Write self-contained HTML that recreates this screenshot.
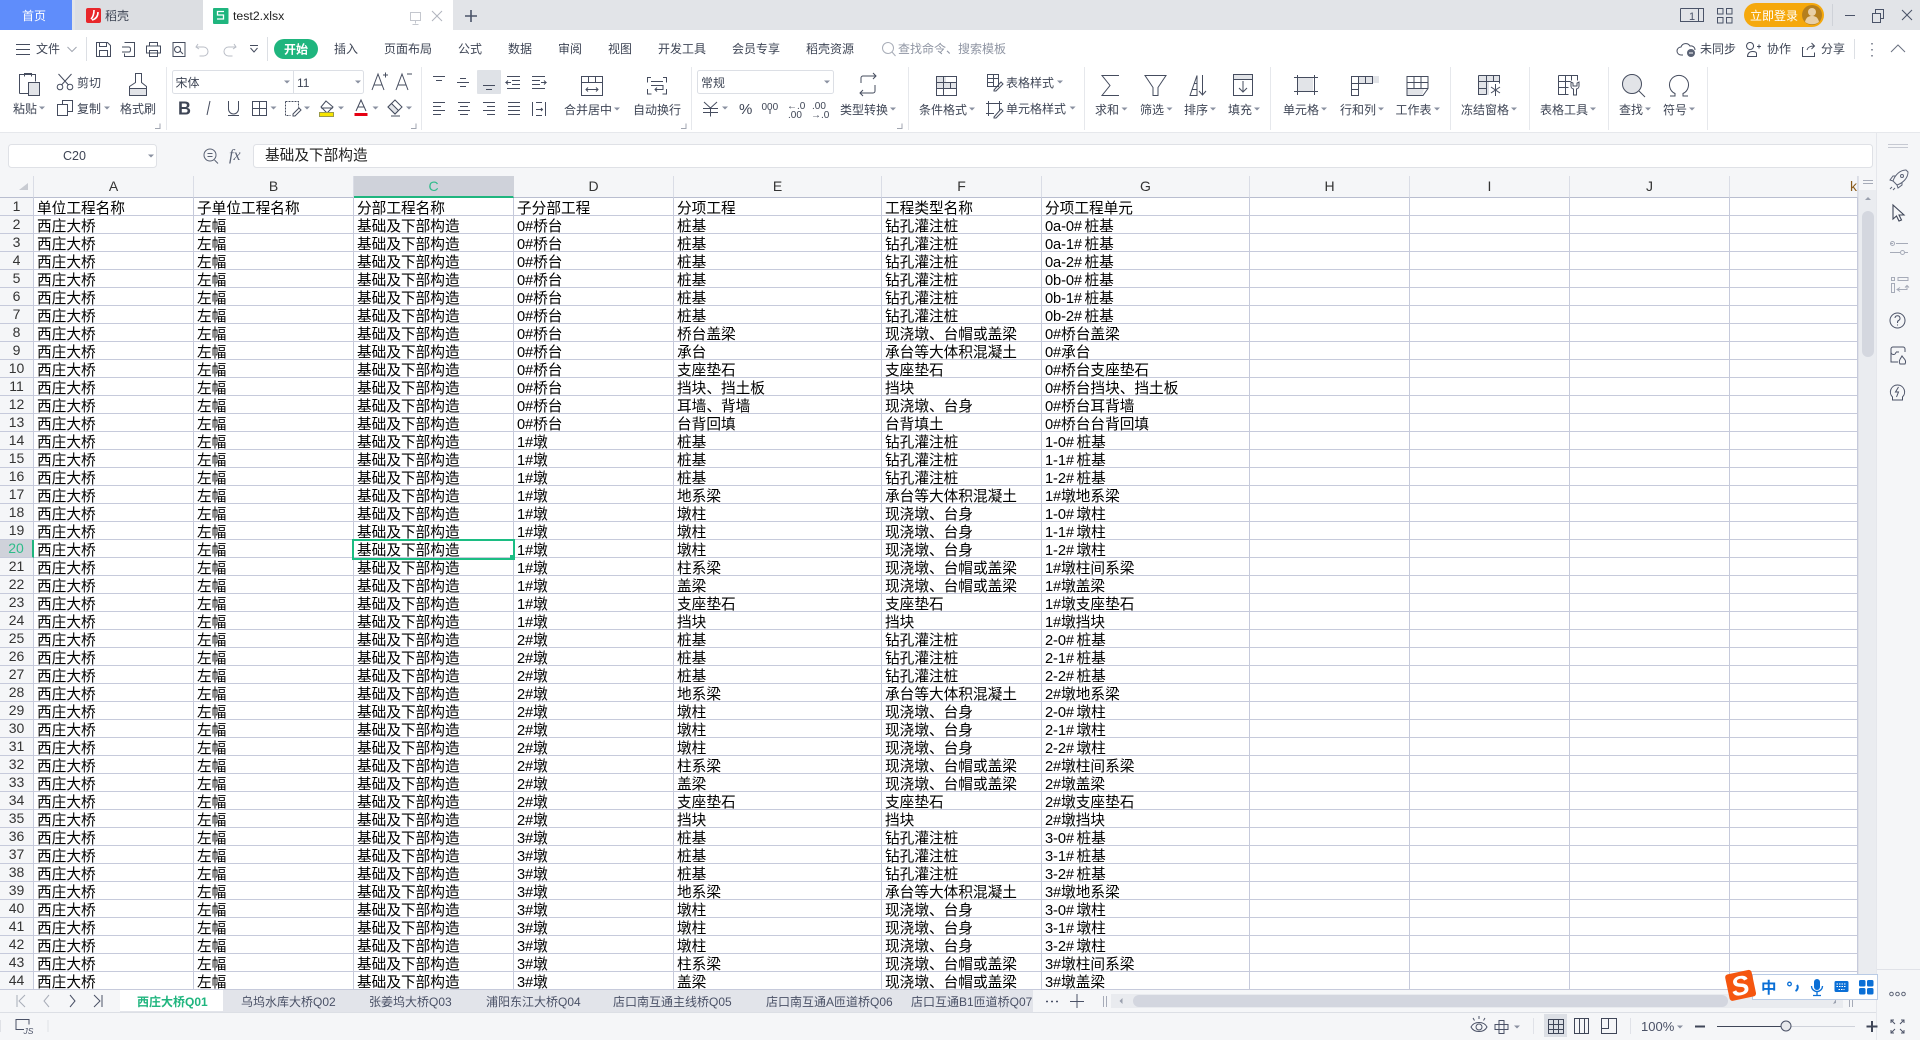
<!DOCTYPE html>
<html lang="zh"><head><meta charset="utf-8"><title>test2.xlsx</title>
<style>
html,body{margin:0;padding:0;width:1920px;height:1040px;overflow:hidden;background:#f5f6f8}
#ui{position:absolute;left:0;top:0;width:1920px;height:1040px}
#ui text{font-family:"Liberation Sans","Noto Sans CJK SC",sans-serif;font-size:12px;fill:#3e4555}
.s{fill:none;stroke:#454c5e;stroke-width:1}
.g{fill:#e2e4e8;stroke:#454c5e;stroke-width:1}
.sep{stroke:#e6e8ec;stroke-width:1}
#sh{position:absolute;left:0;top:176px;width:1858px;height:813px;overflow:hidden;background:#fff}
table,thead,tbody{display:block;width:1858px}
table{font-family:"WenQuanYi Zen Hei","Noto Sans CJK SC",sans-serif;font-size:14.67px;color:#000}
tr{display:flex;height:18px}
thead tr{height:22px}
td,th{display:block;flex:none;box-sizing:border-box;width:160px;overflow:hidden;white-space:nowrap;border-right:1px solid #c6cadb;border-bottom:1px solid #c6cadb}
th:first-child{width:34px}
td:nth-child(6),td:nth-child(8),th:nth-child(6),th:nth-child(8){width:208px}
td:nth-child(12),th:nth-child(12){width:128px}
td{height:18px;padding:2px 0 0 3px;line-height:15px}
th{background:#f5f6f8;font:14px/17px "Liberation Sans",sans-serif;color:#333;padding:0;text-align:center;height:18px}
thead th{height:22px;line-height:21px;border-right:1px solid #dadde6;border-bottom:1px solid #b9bed0}
thead th.c{background:#cfd2da;color:#2ebc8a;border-bottom:2px solid #1fb57e;border-right:1px solid #cfd2da}
th.r{background:#cfd2da;color:#2ebc8a;border-right:2px solid #1fb57e}
i{font:normal 14.67px/0 "Liberation Sans",sans-serif;letter-spacing:-.1px}
i.h{padding-right:2.5px}
#sel{position:absolute;left:352px;top:539px;width:159px;height:17px;border:2px solid #1cbd83}
#hd{position:absolute;left:510px;top:555px;width:5px;height:5px;background:#1cbd83}
#vb{position:absolute;left:1858px;top:176px;width:18px;height:837px;background:#eaecf0}
#side{position:absolute;left:1876px;top:132px;width:44px;height:908px;background:#f5f6f8;border-left:1px solid #e5e7ec;box-sizing:border-box}
</style></head><body>
<div id="sh"><table>
<thead><tr><th></th><th>A</th><th>B</th><th class="c">C</th><th>D</th><th>E</th><th>F</th><th>G</th><th>H</th><th>I</th><th>J</th><th style="text-align:right;color:#8a5a1a">k</th></tr></thead>
<tbody>
<tr><th>1<td>单位工程名称<td>子单位工程名称<td>分部工程名称<td>子分部工程<td>分项工程<td>工程类型名称<td>分项工程单元<td><td><td><td></tr>
<tr><th>2<td>西庄大桥<td>左幅<td>基础及下部构造<td><i>0#</i>桥台<td>桩基<td>钻孔灌注桩<td><i class="h">0a-0#</i>桩基<td><td><td><td></tr>
<tr><th>3<td>西庄大桥<td>左幅<td>基础及下部构造<td><i>0#</i>桥台<td>桩基<td>钻孔灌注桩<td><i class="h">0a-1#</i>桩基<td><td><td><td></tr>
<tr><th>4<td>西庄大桥<td>左幅<td>基础及下部构造<td><i>0#</i>桥台<td>桩基<td>钻孔灌注桩<td><i class="h">0a-2#</i>桩基<td><td><td><td></tr>
<tr><th>5<td>西庄大桥<td>左幅<td>基础及下部构造<td><i>0#</i>桥台<td>桩基<td>钻孔灌注桩<td><i class="h">0b-0#</i>桩基<td><td><td><td></tr>
<tr><th>6<td>西庄大桥<td>左幅<td>基础及下部构造<td><i>0#</i>桥台<td>桩基<td>钻孔灌注桩<td><i class="h">0b-1#</i>桩基<td><td><td><td></tr>
<tr><th>7<td>西庄大桥<td>左幅<td>基础及下部构造<td><i>0#</i>桥台<td>桩基<td>钻孔灌注桩<td><i class="h">0b-2#</i>桩基<td><td><td><td></tr>
<tr><th>8<td>西庄大桥<td>左幅<td>基础及下部构造<td><i>0#</i>桥台<td>桥台盖梁<td>现浇墩、台帽或盖梁<td><i>0#</i>桥台盖梁<td><td><td><td></tr>
<tr><th>9<td>西庄大桥<td>左幅<td>基础及下部构造<td><i>0#</i>桥台<td>承台<td>承台等大体积混凝土<td><i>0#</i>承台<td><td><td><td></tr>
<tr><th>10<td>西庄大桥<td>左幅<td>基础及下部构造<td><i>0#</i>桥台<td>支座垫石<td>支座垫石<td><i>0#</i>桥台支座垫石<td><td><td><td></tr>
<tr><th>11<td>西庄大桥<td>左幅<td>基础及下部构造<td><i>0#</i>桥台<td>挡块、挡土板<td>挡块<td><i>0#</i>桥台挡块、挡土板<td><td><td><td></tr>
<tr><th>12<td>西庄大桥<td>左幅<td>基础及下部构造<td><i>0#</i>桥台<td>耳墙、背墙<td>现浇墩、台身<td><i>0#</i>桥台耳背墙<td><td><td><td></tr>
<tr><th>13<td>西庄大桥<td>左幅<td>基础及下部构造<td><i>0#</i>桥台<td>台背回填<td>台背填土<td><i>0#</i>桥台台背回填<td><td><td><td></tr>
<tr><th>14<td>西庄大桥<td>左幅<td>基础及下部构造<td><i>1#</i>墩<td>桩基<td>钻孔灌注桩<td><i class="h">1-0#</i>桩基<td><td><td><td></tr>
<tr><th>15<td>西庄大桥<td>左幅<td>基础及下部构造<td><i>1#</i>墩<td>桩基<td>钻孔灌注桩<td><i class="h">1-1#</i>桩基<td><td><td><td></tr>
<tr><th>16<td>西庄大桥<td>左幅<td>基础及下部构造<td><i>1#</i>墩<td>桩基<td>钻孔灌注桩<td><i class="h">1-2#</i>桩基<td><td><td><td></tr>
<tr><th>17<td>西庄大桥<td>左幅<td>基础及下部构造<td><i>1#</i>墩<td>地系梁<td>承台等大体积混凝土<td><i>1#</i>墩地系梁<td><td><td><td></tr>
<tr><th>18<td>西庄大桥<td>左幅<td>基础及下部构造<td><i>1#</i>墩<td>墩柱<td>现浇墩、台身<td><i class="h">1-0#</i>墩柱<td><td><td><td></tr>
<tr><th>19<td>西庄大桥<td>左幅<td>基础及下部构造<td><i>1#</i>墩<td>墩柱<td>现浇墩、台身<td><i class="h">1-1#</i>墩柱<td><td><td><td></tr>
<tr><th class="r">20<td>西庄大桥<td>左幅<td>基础及下部构造<td><i>1#</i>墩<td>墩柱<td>现浇墩、台身<td><i class="h">1-2#</i>墩柱<td><td><td><td></tr>
<tr><th>21<td>西庄大桥<td>左幅<td>基础及下部构造<td><i>1#</i>墩<td>柱系梁<td>现浇墩、台帽或盖梁<td><i>1#</i>墩柱间系梁<td><td><td><td></tr>
<tr><th>22<td>西庄大桥<td>左幅<td>基础及下部构造<td><i>1#</i>墩<td>盖梁<td>现浇墩、台帽或盖梁<td><i>1#</i>墩盖梁<td><td><td><td></tr>
<tr><th>23<td>西庄大桥<td>左幅<td>基础及下部构造<td><i>1#</i>墩<td>支座垫石<td>支座垫石<td><i>1#</i>墩支座垫石<td><td><td><td></tr>
<tr><th>24<td>西庄大桥<td>左幅<td>基础及下部构造<td><i>1#</i>墩<td>挡块<td>挡块<td><i>1#</i>墩挡块<td><td><td><td></tr>
<tr><th>25<td>西庄大桥<td>左幅<td>基础及下部构造<td><i>2#</i>墩<td>桩基<td>钻孔灌注桩<td><i class="h">2-0#</i>桩基<td><td><td><td></tr>
<tr><th>26<td>西庄大桥<td>左幅<td>基础及下部构造<td><i>2#</i>墩<td>桩基<td>钻孔灌注桩<td><i class="h">2-1#</i>桩基<td><td><td><td></tr>
<tr><th>27<td>西庄大桥<td>左幅<td>基础及下部构造<td><i>2#</i>墩<td>桩基<td>钻孔灌注桩<td><i class="h">2-2#</i>桩基<td><td><td><td></tr>
<tr><th>28<td>西庄大桥<td>左幅<td>基础及下部构造<td><i>2#</i>墩<td>地系梁<td>承台等大体积混凝土<td><i>2#</i>墩地系梁<td><td><td><td></tr>
<tr><th>29<td>西庄大桥<td>左幅<td>基础及下部构造<td><i>2#</i>墩<td>墩柱<td>现浇墩、台身<td><i class="h">2-0#</i>墩柱<td><td><td><td></tr>
<tr><th>30<td>西庄大桥<td>左幅<td>基础及下部构造<td><i>2#</i>墩<td>墩柱<td>现浇墩、台身<td><i class="h">2-1#</i>墩柱<td><td><td><td></tr>
<tr><th>31<td>西庄大桥<td>左幅<td>基础及下部构造<td><i>2#</i>墩<td>墩柱<td>现浇墩、台身<td><i class="h">2-2#</i>墩柱<td><td><td><td></tr>
<tr><th>32<td>西庄大桥<td>左幅<td>基础及下部构造<td><i>2#</i>墩<td>柱系梁<td>现浇墩、台帽或盖梁<td><i>2#</i>墩柱间系梁<td><td><td><td></tr>
<tr><th>33<td>西庄大桥<td>左幅<td>基础及下部构造<td><i>2#</i>墩<td>盖梁<td>现浇墩、台帽或盖梁<td><i>2#</i>墩盖梁<td><td><td><td></tr>
<tr><th>34<td>西庄大桥<td>左幅<td>基础及下部构造<td><i>2#</i>墩<td>支座垫石<td>支座垫石<td><i>2#</i>墩支座垫石<td><td><td><td></tr>
<tr><th>35<td>西庄大桥<td>左幅<td>基础及下部构造<td><i>2#</i>墩<td>挡块<td>挡块<td><i>2#</i>墩挡块<td><td><td><td></tr>
<tr><th>36<td>西庄大桥<td>左幅<td>基础及下部构造<td><i>3#</i>墩<td>桩基<td>钻孔灌注桩<td><i class="h">3-0#</i>桩基<td><td><td><td></tr>
<tr><th>37<td>西庄大桥<td>左幅<td>基础及下部构造<td><i>3#</i>墩<td>桩基<td>钻孔灌注桩<td><i class="h">3-1#</i>桩基<td><td><td><td></tr>
<tr><th>38<td>西庄大桥<td>左幅<td>基础及下部构造<td><i>3#</i>墩<td>桩基<td>钻孔灌注桩<td><i class="h">3-2#</i>桩基<td><td><td><td></tr>
<tr><th>39<td>西庄大桥<td>左幅<td>基础及下部构造<td><i>3#</i>墩<td>地系梁<td>承台等大体积混凝土<td><i>3#</i>墩地系梁<td><td><td><td></tr>
<tr><th>40<td>西庄大桥<td>左幅<td>基础及下部构造<td><i>3#</i>墩<td>墩柱<td>现浇墩、台身<td><i class="h">3-0#</i>墩柱<td><td><td><td></tr>
<tr><th>41<td>西庄大桥<td>左幅<td>基础及下部构造<td><i>3#</i>墩<td>墩柱<td>现浇墩、台身<td><i class="h">3-1#</i>墩柱<td><td><td><td></tr>
<tr><th>42<td>西庄大桥<td>左幅<td>基础及下部构造<td><i>3#</i>墩<td>墩柱<td>现浇墩、台身<td><i class="h">3-2#</i>墩柱<td><td><td><td></tr>
<tr><th>43<td>西庄大桥<td>左幅<td>基础及下部构造<td><i>3#</i>墩<td>柱系梁<td>现浇墩、台帽或盖梁<td><i>3#</i>墩柱间系梁<td><td><td><td></tr>
<tr><th>44<td>西庄大桥<td>左幅<td>基础及下部构造<td><i>3#</i>墩<td>盖梁<td>现浇墩、台帽或盖梁<td><i>3#</i>墩盖梁<td><td><td><td></tr>
</tbody></table></div>
<div id="sel"></div><div id="hd"></div>
<div id="vb"></div><div id="side"></div>

<svg id="ui" width="1920" height="1040" viewBox="0 0 1920 1040" xmlns="http://www.w3.org/2000/svg">
<defs><path id="t" d="M-3-1.500h6l-3 3z" fill="#8a90a0"/></defs>
<!-- title bar -->
<rect x="0" y="0" width="1920" height="30" fill="#e2e4e8"/>
<rect x="0" y="0" width="72" height="30" fill="#5f8dfb"/>
<rect x="75" y="0" width="128" height="30" fill="#dcdee2"/>
<rect x="203" y="0" width="250" height="30" fill="#fff"/>
<text x="22" y="20" style="fill:#fff">首页</text>
<rect x="86" y="8" width="15" height="15" rx="2" fill="#e8262a"/>
<path d="M91 19c2-2 3-5 3-9M98 12c0 4-2 7-6 8" fill="none" stroke="#fff" stroke-width="1.600"/>
<text x="105" y="20">稻壳</text>
<rect x="213" y="8" width="15.500" height="16" rx="1" fill="#1fb57e"/>
<path d="M224 11.500h-6.500v3.500h6v4h-6.500" fill="none" stroke="#fff" stroke-width="1.300"/>
<text x="233" y="20" style="font-size:12.300px;fill:#222">test2.xlsx</text>
<path d="M410.500 12.500h10v8h-10zM415.500 20.500v3M412.500 24.500h6" fill="none" stroke="#c4c7ce"/>
<path d="M432 11l10 10M442 11l-10 10" fill="none" stroke="#b0b4bd"/>
<path d="M471 10v12M465 16h12" fill="none" stroke="#4a5368" stroke-width="1.600"/>
<path d="M1680.500 8.500h20M1680.500 8.500v13h20" fill="none" stroke="#4a5368"/>
<path d="M1698.500 8.500h5v13h-5z" fill="none" stroke="#4a5368"/>
<text x="1689" y="20" style="font-size:11px;fill:#4a5368">1</text>
<path d="M1717.500 8.500h5.500v5.500h-5.500zM1726.500 8.500h5.500v5.500h-5.500zM1717.500 17.500h5.500v5.500h-5.500zM1726.500 17.500h5.500v5.500h-5.500z" fill="none" stroke="#4a5368"/>
<rect x="1744" y="3" width="80" height="24" rx="12" fill="#f5a80c"/>
<text x="1750" y="20" style="fill:#fff">立即登录</text>
<circle cx="1812" cy="15" r="10" fill="#b57f1e"/>
<circle cx="1812" cy="12" r="4" fill="#e8cfa6"/><path d="M1805 22c1-5 4-6 7-6s6 1 7 6c-4 3-10 3-14 0z" fill="#e8cfa6"/>
<path d="M1832.500 4v22" stroke="#cfd2d8"/>
<path d="M1845 15.500h10" stroke="#4a5368"/>
<path d="M1872.500 13.500h8v9h-8zM1875.500 13v-3.500h8v9h-3" fill="none" stroke="#4a5368"/>
<path d="M1902 10l10 10M1912 10l-10 10" stroke="#4a5368"/>

<!-- ribbon -->
<rect x="0" y="30" width="1920" height="102" fill="#fff"/>
<rect x="0" y="132" width="1920" height="1" fill="#e6e8ec"/>
<rect x="0" y="133" width="1876" height="43" fill="#f5f6f8"/>
<path class="s" d="M16 44.500h14M16 49.500h14M16 54.500h14"/>
<text x="36" y="53">文件</text>
<path d="M67.500 47l4.500 4.500 4.500-4.500" fill="none" stroke="#a0a5b0"/>
<path class="sep" d="M86.500 37v24M267.500 37v24" style="stroke:#dcdfe4"/>
<path class="s" d="M96.500 42.500h11l3 3v11h-14zM99.500 42.500v4h7v-4M99.500 56.500v-6h8v6"/>
<path class="s" d="M124.500 42.500h10v14h-10v-3M122 47h7M122 52h7M129 47c2 0 2 5 0 5"/>
<path class="s" d="M149.500 46v-3.500h8V46M146.500 46h14v7h-14zM149.500 50.500h8v6h-8z"/>
<path class="s" d="M173 56.500v-14h12v14zM177.500 46.500a3 3 0 1 0 .1 0M180 51l3 3"/>
<path d="M198 44l-2 3 3 2M196.500 47h7a4 4 0 0 1 0 9h-4" fill="none" stroke="#b9bdc6"/>
<path d="M234 44l2 3-3 2M235.500 47h-7a4 4 0 0 0 0 9h4" fill="none" stroke="#b9bdc6"/>
<path class="s" d="M250 45.500h8M250.500 48l3.500 4 3.500-4"/>
<rect x="274" y="39" width="44" height="20" rx="10" fill="#1fb57e"/>
<text x="284" y="53.500" style="fill:#fff;font-weight:700">开始</text>
<text x="334" y="53">插入</text><text x="384" y="53">页面布局</text><text x="458" y="53">公式</text><text x="508" y="53">数据</text><text x="558" y="53">审阅</text><text x="608" y="53">视图</text><text x="658" y="53">开发工具</text><text x="732" y="53">会员专享</text><text x="806" y="53">稻壳资源</text>
<circle cx="888" cy="48" r="5.500" fill="none" stroke="#a8adb8"/><path d="M892 52l3.500 4" stroke="#a8adb8"/>
<text x="898" y="53" style="fill:#8f95a3">查找命令、搜索模板</text>
<path class="s" d="M1683 55h-2a4 4 0 0 1 0-8 5 5 0 0 1 9-1 4 4 0 0 1 5 4"/><circle cx="1691" cy="53" r="4" fill="#5a6274"/><path d="M1689 53h4" stroke="#fff"/>
<text x="1700" y="53">未同步</text>
<path class="s" d="M1750 49.500a3.500 3.500 0 1 1 .1 0M1747.500 56.500c0-3 2-5 5-5s4 1 4 2v3zM1757 46.500h4M1759 44.500v4"/>
<text x="1767" y="53">协作</text>
<path class="s" d="M1803.500 47.500h-1v9h12v-4M1807 50c1-3 3-4 7-4M1811.500 43l3 3-3 3"/>
<text x="1821" y="53">分享</text>
<path class="sep" d="M1854.500 39v20" style="stroke:#dcdfe4"/>
<path d="M1872 43v1.500M1872 49v1.500M1872 55v1.500" stroke="#6a7080" stroke-width="1.500"/>
<path d="M1891 52l7-7 7 7" fill="none" stroke="#6a7080"/>

<!-- clipboard group -->
<path class="s" d="M19.500 93.500v-19h16v7"/><path class="g" d="M28.500 82.500h11v13h-11z"/><path class="s" d="M19.500 93.500h9M24.500 76.500v-3h7v3"/>
<circle cx="60" cy="87" r="2.800" class="s"/><circle cx="70" cy="87" r="2.800" class="s"/><path class="s" d="M61.500 85l10-11M68.500 85l-10-11"/>
<text x="77" y="87">剪切</text>
<path class="s" d="M62.500 105v-4.500h10v11h-5M57.500 104.500h10v11h-10z"/>
<text x="77" y="113">复制</text><use href="#t" x="107" y="108"/>
<text x="13" y="113">粘贴</text><use href="#t" x="42" y="108"/>
<path class="s" d="M135.500 73.500h6v9l5 4v9h-17v-9l6-4z"/><path class="g" d="M129.500 88.500h17v7h-17z"/>
<text x="120" y="113">格式刷</text>
<path d="M155 128.500h5v-5" fill="none" stroke="#a0a5b0"/>
<path class="sep" d="M166.500 67v63M421.500 67v63M691.500 67v63M908.500 67v63M1084.500 67v63M1270.500 67v63M1450.500 67v63M1529.500 67v63M1608.500 67v63M1707.500 67v63"/>
<!-- font -->
<rect x="172.500" y="70.500" width="191" height="23" rx="2" fill="#fff" stroke="#dcdfe5"/>
<path d="M293.500 71v22" stroke="#dcdfe5"/>
<text x="175.500" y="87">宋体</text><use href="#t" x="287" y="82"/>
<text x="297" y="87">11</text><use href="#t" x="358" y="82"/>
<path class="s" d="M372 90l6-16 6 16M374 85h8M383 75h5M385.500 72.500v5"/>
<path class="s" d="M396 90l6-16 6 16M398 85h8M407 74h5"/>
<text x="178" y="114.500" style="font-size:18px;font-weight:700;fill:#3e4555">B</text>
<path class="s" d="M210 101l-3 14"/>
<path class="s" d="M228.500 101v8a5 5 0 0 0 10 0v-8M228 115.500h11"/>
<path class="s" d="M252.500 101.500h14v14h-14zM252.500 108.500h14M259.500 101.500v14"/><use href="#t" x="273.500" y="108"/>
<path class="s" d="M285.500 101.500h13v6M285.500 101.500v14h5" stroke-dasharray="2 1"/><path class="s" d="M293 114l6-6 2 2-6 6h-2z"/><use href="#t" x="307" y="108"/>
<path class="s" d="M326 101l7 6-6 6-6-6zM321 108h12"/><rect x="319.500" y="112.500" width="14" height="4" fill="#f7e500" stroke="#9a9a4a"/><use href="#t" x="341" y="108"/>
<path class="s" d="M356 111l5-11 5 11M358 107h6"/><rect x="354.500" y="113" width="13" height="3" fill="#e60012"/><use href="#t" x="375.500" y="108"/>
<path class="s" d="M395 100l7 7-7 7-7-7z"/><path d="M388 107l3.500-3.500 7 7-3.500 3.500z" fill="#e2e4e8" stroke="#454c5e"/><path class="s" d="M391 116h9"/><use href="#t" x="409" y="108"/>
<path d="M411 128.500h5v-5" fill="none" stroke="#a0a5b0"/>
<!-- align -->
<rect x="477" y="70" width="24" height="24" fill="#dfe2e7" rx="1"/>
<path class="s" d="M433 76.500h12M436 80.500h6M457 82.500h12M460 86.500h6M460 78.500h6M483 85.500h12M486 89.500h6"/>
<path class="s" d="M507 76.500h13M512 80.500h8M512 84.500h8M507 88.500h13M511 82.500h-5l2-2M506 82.500l2 2"/>
<path class="s" d="M532 76.500h13M532 80.500h8M532 84.500h8M532 88.500h13M541 82.500h5l-2-2M546 82.500l-2 2"/>
<path class="s" d="M433 102.500h12M433 106.500h8M433 110.500h12M433 114.500h8"/>
<path class="s" d="M458 102.500h12M460 106.500h8M458 110.500h12M460 114.500h8"/>
<path class="s" d="M483 102.500h12M487 106.500h8M483 110.500h12M487 114.500h8"/>
<path class="s" d="M508 102.500h12M508 106.500h12M508 110.500h12M508 114.500h12"/>
<path class="s" d="M532.500 102v14M545.500 102v14M536 109.500h6M536 102.500h6M536 115.500h6M541 108l1.500 1.500-1.500 1.500"/>
<path class="s" d="M581.500 76.500h21v19h-21zM581.500 82.500h21M588.500 76.500v6M595.500 76.500v6M586 89.500h12M588 87.500l-2 2 2 2M596 87.500l2 2-2 2"/>
<text x="564" y="114">合并居中</text><use href="#t" x="617" y="109"/>
<path class="s" d="M651 77.500h-3.500v5M663 77.500h3.500v5M647.500 89v5h4M666.500 89v5h-4M651 81.500h12M651 85.500h12v4h-8M657 87.500l-2 2 2 2"/>
<text x="633" y="114">自动换行</text>
<path d="M681 128.500h5v-5" fill="none" stroke="#a0a5b0"/>
<rect x="697.500" y="70.500" width="136" height="23" rx="2" fill="#fff" stroke="#dcdfe5"/>
<text x="701" y="87">常规</text><use href="#t" x="827" y="82"/>
<path class="s" d="M704 102l6.500 6 6.500-6M703 108.500h15M703 112.500h15M710.500 108.500v8"/><use href="#t" x="725" y="108"/>
<text x="739" y="114" style="font-size:15px">%</text>
<text x="761.500" y="110" style="font-size:10px">000</text><path class="s" d="M770 110v4"/>
<text x="787" y="109" style="font-size:10px">←.0</text><text x="788" y="118" style="font-size:10px">.00</text>
<text x="812" y="109" style="font-size:10px">.00</text><text x="811" y="118" style="font-size:10px">→.0</text>
<path class="s" d="M861 83v-5a2 2 0 0 1 2-2h13M873 73l3 3-3 3M875 85v6a2 2 0 0 1-2 2h-13M863 90l-3 3 3 3"/>
<text x="840" y="114">类型转换</text><use href="#t" x="893" y="109"/>
<path d="M897 128.500h5v-5" fill="none" stroke="#a0a5b0"/>
<!-- conditional -->
<path d="M936 76h10v6h10v6h-20z" fill="#e2e4e8"/>
<path class="s" d="M936.500 76.500h20v19h-20zM936.500 82.500h20M936.500 88.500h20M943.500 76.500v19M950.500 82.500v6"/>
<text x="919" y="114">条件格式</text><use href="#t" x="972" y="109"/>
<path class="s" d="M987.500 74.500h11v12h-11zM987.500 78.500h11M987.500 82.500h6M993.500 74.500v12"/><path class="s" d="M994 90l7-8 2 2-7 7h-2z"/>
<text x="1006" y="87">表格样式</text><use href="#t" x="1060" y="82"/>
<path class="s" d="M988.500 101v15M999.500 101v10M986 103.500h16M986 113.500h8"/><path class="s" d="M994 117l7-8 2 2-7 7h-2z"/>
<text x="1006" y="113">单元格样式</text><use href="#t" x="1072.600" y="108"/>
<!-- sum etc -->
<path class="s" d="M1119 75.500h-17l8 10-8 10h17"/>
<text x="1095" y="114">求和</text><use href="#t" x="1124.500" y="109"/>
<path class="s" d="M1145 75.500h21l-8 12v8h-5v-8z"/>
<text x="1140" y="114">筛选</text><use href="#t" x="1169.500" y="109"/>
<path class="s" d="M1190 95.500l7-20v20zM1192 89.500h5M1194 83.500h3M1202.500 75v20M1199 91l3.500 4 3.500-4"/>
<text x="1184" y="114">排序</text><use href="#t" x="1213" y="109"/>
<rect x="1233" y="74" width="20" height="5" fill="#e2e4e8"/>
<path class="s" d="M1233.500 74.500h19v21h-19zM1233.500 79.500h19M1243 81v11M1239 88l4 4 4-4"/>
<text x="1228" y="114">填充</text><use href="#t" x="1257" y="109"/>
<rect x="1297" y="77" width="16" height="14" fill="#e2e4e8"/>
<path class="s" d="M1297.500 75v20M1314.500 75v20M1294 77.500h24M1294 91.500h24"/>
<text x="1283" y="114">单元格</text><use href="#t" x="1324" y="109"/>
<rect x="1358" y="76" width="21" height="7" fill="#e2e4e8"/>
<path class="s" d="M1351.500 76.500h21v7h-14v12h-7zM1351.500 83.500h7M1351.500 89.500h7M1358.500 76.500v7M1365.500 76.500v7"/>
<text x="1340" y="114">行和列</text><use href="#t" x="1381" y="109"/>
<path d="M1407 89h17l-2 7h-15z" fill="#e2e4e8"/>
<path class="s" d="M1407 76.500h21v12l-5 7h-16zM1407 82.500h21M1407 88.500h21M1414 76.500v12M1421 76.500v12"/>
<text x="1395.500" y="114">工作表</text><use href="#t" x="1437" y="109"/>
<rect x="1479" y="75" width="10" height="20" fill="#e2e4e8"/><rect x="1479" y="75" width="20" height="6" fill="#e2e4e8"/>
<path class="s" d="M1478.500 75.500h21v8M1478.500 75.500v19h8M1478.500 81.500h21M1478.500 88.500h8M1486.500 75.500v19M1493.500 75.500v6"/>
<path class="s" d="M1495.500 84v12M1491 87l9 6M1500 87l-9 6"/>
<text x="1461" y="114">冻结窗格</text><use href="#t" x="1514" y="109"/>
<path class="s" d="M1558.500 75.500h19v5M1558.500 75.500v19h10M1558.500 81.500h12M1558.500 87.500h10M1565.500 75.500v19M1571.500 75.500v5"/>
<path class="s" d="M1571 82v4a3 3 0 0 0 2.500 3v6h3v-6a3 3 0 0 0 2.500-3v-4l-2 1v3h-4v-3z"/>
<text x="1540" y="114">表格工具</text><use href="#t" x="1593" y="109"/>
<circle cx="1632" cy="84" r="9.500" fill="#e2e4e8" stroke="#454c5e"/><path class="s" d="M1639 91l6 6"/>
<text x="1619" y="114">查找</text><use href="#t" x="1648" y="109"/>
<path class="s" d="M1670 96h5v-2.500a9.500 9.500 0 1 1 8 0V96h5"/>
<text x="1663" y="114">符号</text><use href="#t" x="1692" y="109"/>

<!-- formula bar -->
<rect x="8.500" y="144.500" width="148" height="23" rx="3" fill="#fff" stroke="#dfe1e6"/>
<text x="63" y="160" style="font-size:12.500px">C20</text><use href="#t" x="151" y="156"/>
<circle cx="210" cy="155" r="6" fill="none" stroke="#5a6274"/><path d="M214.500 160l3.500 3.500M207.500 153.500h5M207.500 156.500h5" stroke="#5a6274"/>
<text x="229" y="160" style="font-family:'Liberation Serif',serif;font-style:italic;font-size:16px;fill:#5a6274">fx</text>
<rect x="253.500" y="144.500" width="1619" height="23" rx="3" fill="#fff" stroke="#dfe1e6"/>
<text x="265" y="160" style="font-size:14.670px;fill:#222">基础及下部构造</text>
<path d="M28 190v-7l-9 7z" fill="#c8cbd2"/>

<!-- scrollbar -->
<rect x="1858" y="176" width="1" height="837" fill="#dfe1e8"/>
<rect x="1859" y="176" width="17" height="14" fill="#f5f6f8"/>
<path d="M1863 180.500h10M1863 183.500h10" stroke="#a6abb8"/>
<path d="M1868 197l-3 3h6z" fill="#9aa0ae"/>
<rect x="1862" y="211" width="12" height="146" rx="6" fill="#d4d7df"/>

<!-- sidebar icons -->
<path d="M1888 144.500h20M1888 147.500h20" stroke="#c6c9d2"/>
<path d="M1906 170c-6 0-11 5-13 11l4 4c6-2 11-7 11-13zM1893 181l-3-1 3-4 3 0M1897 185l1 3 4-3 0-3M1892 187l-2 2M1895 188l-2 2" fill="none" stroke="#5c6376"/><circle cx="1902" cy="176" r="1.500" fill="none" stroke="#5c6376"/>
<path d="M1893 205v14l3.500-3 2.500 5 2.500-1-2.500-5h5z" fill="none" stroke="#3f4658" stroke-width="1.100"/>
<path d="M1893 243.500h-3M1890 252.500h10M1908 252.500h-3" stroke="#a6abb8" fill="none"/><path d="M1896 243.500h12" stroke="#a6abb8"/><circle cx="1892.500" cy="243.500" r="2" fill="none" stroke="#a6abb8"/><circle cx="1902.500" cy="252.500" r="2" fill="none" stroke="#a6abb8"/>
<path d="M1891.500 277.500h3v3h-3zM1898 277.500h10v3h-10zM1891.500 283.500h3v9h-3zM1897 289.500h10v-4M1905 287.500l2-2 2 2M1900 287.500l-3 2 3 2" fill="none" stroke="#a6abb8"/>
<circle cx="1897.500" cy="320.500" r="7.500" fill="none" stroke="#4a5166"/><path d="M1895 318a2.500 2.500 0 1 1 3.500 2.500c-1 .5-1 1-1 2.500M1897.500 324.500v1" fill="none" stroke="#4a5166"/>
<path d="M1891 352v-3a2 2 0 0 1 2-2h10a2 2 0 0 1 2 2v3M1891 352a2.500 2.500 0 0 0 5 0M1891 352v10h7M1896 352h3" fill="none" stroke="#4a5166"/><path d="M1900 364c-2-3 1-6 2-8 1 2 5 4 3 8z" fill="none" stroke="#4a5166"/>
<path d="M1897.500 385a7 7 0 0 1 5 12v3h-10v-3a7 7 0 0 1 5-12zM1898.500 387l-3 5h3l-2 5" fill="none" stroke="#4a5166"/>
<path d="M1877 969.500h43" stroke="#e0e2e8"/>
<circle cx="1891.500" cy="994" r="1.800" fill="none" stroke="#5c6376"/><circle cx="1897.500" cy="994" r="1.800" fill="none" stroke="#5c6376"/><circle cx="1903.500" cy="994" r="1.800" fill="none" stroke="#5c6376"/>

<!-- sheet tabs -->
<rect x="0" y="989" width="1876" height="24" fill="#f5f6f8"/>
<rect x="120" y="989" width="913" height="24" fill="#e2e4ea"/>
<rect x="120" y="990" width="103" height="21" fill="#fff"/>
<rect x="0" y="989" width="1858" height="1" fill="#c6cadb"/>
<path d="M17 995v12M25 995l-6 6 6 6" fill="none" stroke="#a8adb8"/>
<path d="M49 995l-5 6 5 6" fill="none" stroke="#a8adb8"/>
<path d="M70 995l5 6-5 6" fill="none" stroke="#4a5166"/>
<path d="M94 995l6 6-6 6M102 995v12" fill="none" stroke="#4a5166"/>
<text x="137" y="1006" style="fill:#1fb57e;font-weight:700">西庄大桥Q01</text>
<text x="241" y="1006" style="fill:#4a5166">乌坞水库大桥Q02</text>
<text x="369" y="1006" style="fill:#4a5166">张姜坞大桥Q03</text>
<text x="486" y="1006" style="fill:#4a5166">浦阳东江大桥Q04</text>
<text x="613" y="1006" style="fill:#4a5166">店口南互通主线桥Q05</text>
<text x="766" y="1006" style="fill:#4a5166">店口南互通A匝道桥Q06</text>
<text x="911" y="1006" style="fill:#4a5166">店口互通B1匝道桥Q07</text>
<path d="M1046 1001.500h2M1051 1001.500h2M1056 1001.500h2" stroke="#4a5166" stroke-width="1.500"/>
<path d="M1077 994v14M1070 1001.500h14" stroke="#4a5166"/>
<path d="M1103.500 996v11M1106.500 996v11" stroke="#a6abb8"/>
<rect x="1111" y="994" width="732" height="14" fill="#e9ebef"/>
<path d="M1119.500 1001l3-3v6z" fill="#9aa0ae"/>
<rect x="1133" y="995" width="595" height="12" rx="6" fill="#d3d6df"/>
<path d="M1836 999v4l-3 1z" fill="#9aa0ae"/>
<path d="M1849.500 996v11M1852.500 996v11" stroke="#a6abb8"/>

<!-- status bar -->
<rect x="0" y="1013" width="1876" height="27" fill="#f5f6f8"/>
<rect x="0" y="1012" width="1876" height="1" fill="#dcdfe5"/>
<path d="M.5 1020v12M48 1020v12" stroke="#dfe1e6"/>
<path d="M24 1029.500h-8v-10h13v5" fill="none" stroke="#4a5166"/><path d="M29 1019v4" stroke="#4a5166"/>
<text x="23.500" y="1034" style="font-size:8.500px;font-style:italic;fill:#4a5166">JS</text>
<path d="M1471 1027c3-6 13-6 16 0-3 6-13 6-16 0z" fill="none" stroke="#4a5166"/><circle cx="1479" cy="1027" r="3" fill="none" stroke="#4a5166"/><path d="M1479 1016v3M1473 1018l1.500 2.500M1485 1018l-1.500 2.500" stroke="#4a5166"/>
<path d="M1499 1020.500h5v4h4v5h-4v4h-5v-4h-4v-5h4zM1499 1024.500h5v5h-5z" fill="none" stroke="#4a5166"/>
<use href="#t" x="1517" y="1027"/>
<path d="M1533.500 1018v16M1630.500 1018v16" stroke="#e0e2e8"/>
<rect x="1544" y="1014" width="23" height="23" fill="#dcdfe5"/>
<path d="M1548.500 1019.500h15v14h-15zM1548.500 1024.500h15M1548.500 1029.500h15M1553.500 1019.500v14M1558.500 1019.500v14" fill="none" stroke="#3f4658"/>
<path d="M1574.500 1018.500h14v15h-14zM1579.500 1018.500v15M1584.500 1018.500v15" fill="none" stroke="#3f4658"/>
<path d="M1601.500 1018.500h15v15h-15zM1601.500 1028.500h7v-10" fill="none" stroke="#3f4658"/>
<text x="1641" y="1031" style="font-size:13px;fill:#4a5166">100%</text>
<use href="#t" x="1680" y="1027"/>
<path d="M1695 1026.500h10" stroke="#3f4658" stroke-width="2"/>
<path d="M1786 1026.500h69" stroke="#cfd2da"/><path d="M1717 1026.500h69" stroke="#3f4658"/>
<circle cx="1786" cy="1026" r="5" fill="#e8e9ec" stroke="#4a5166"/>
<path d="M1872 1021v11M1866.500 1026.500h11" stroke="#3f4658" stroke-width="2"/>
<path d="M1891 1023v-3h3M1904 1023v-3h-3M1891 1030v3h3M1904 1030v3h-3M1891 1020l4 4M1904 1020l-4 4M1891 1033l4-4M1904 1033l-4-4" fill="none" stroke="#4a5166"/>

<!-- sogou -->
<rect x="1752.500" y="974.500" width="125" height="25" fill="#fff" stroke="#b9cbe5"/>
<rect x="1727" y="972" width="27" height="27" rx="3" fill="#f5560f" transform="rotate(-12 1740 985)"/>
<text x="1731" y="995" transform="rotate(-12 1740 985)" style="font-size:27px;font-weight:700;font-style:italic;fill:#fff">S</text>
<text x="1761" y="993" style="font-size:15.500px;font-weight:700;fill:#0a6fd6">中</text>
<circle cx="1789.500" cy="984" r="1.800" fill="none" stroke="#0a6fd6" stroke-width="1.300"/><path d="M1797 985c1.500 2 .5 5-1.500 6" fill="none" stroke="#0a6fd6" stroke-width="2"/>
<rect x="1814" y="979" width="6" height="11" rx="3" fill="#0a6fd6"/><path d="M1811.500 986a5.500 5.500 0 0 0 11 0M1817 992v3M1813 995.500h8" fill="none" stroke="#0a6fd6" stroke-width="1.300"/>
<rect x="1834.500" y="981" width="14" height="11" rx="1.500" fill="#0a6fd6"/><path d="M1836.500 984h10M1836.500 986.500h10M1838.500 989.500h6" stroke="#fff" stroke-dasharray="1.500 1"/>
<rect x="1859" y="980" width="6.500" height="6.500" rx="1.500" fill="#0a6fd6"/><rect x="1867" y="980" width="6.500" height="6.500" rx="1.500" fill="#0a6fd6"/><rect x="1859" y="988" width="6.500" height="6.500" rx="1.500" fill="#0a6fd6"/><rect x="1867" y="988" width="6.500" height="6.500" rx="1.500" fill="#0a6fd6"/>
</svg>
</body></html>
